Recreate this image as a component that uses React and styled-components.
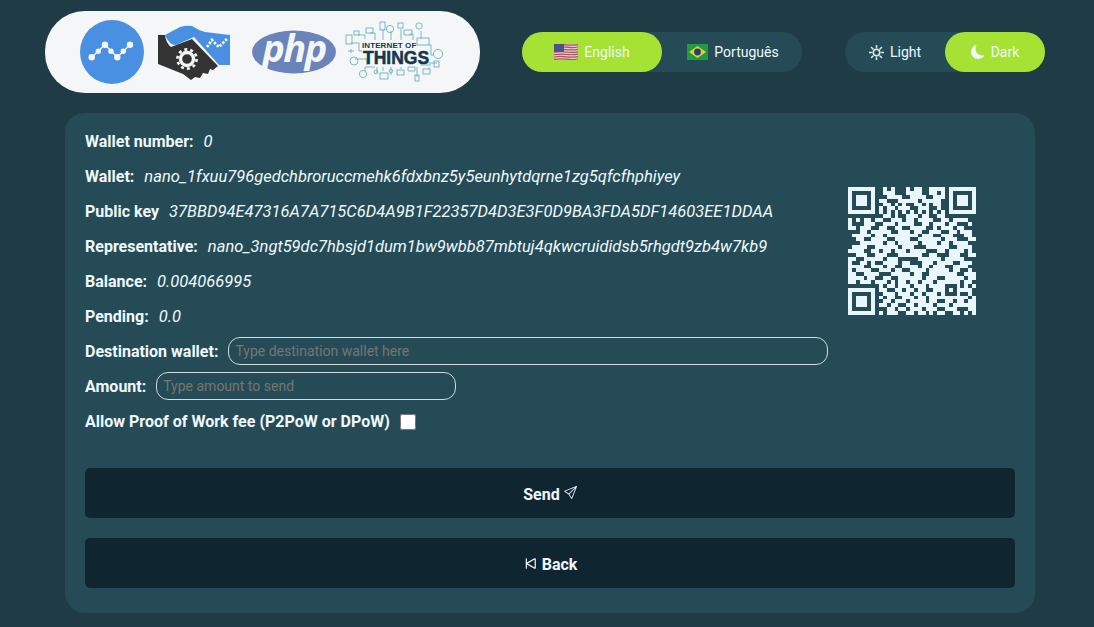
import styled, { createGlobalStyle } from 'styled-components';
import { BsSend, BsSkipStart, BsSun, BsMoonFill } from 'react-icons/bs';

const GlobalStyle = createGlobalStyle`
    * {
        box-sizing: border-box;
    }
    body {
        margin: 0;
        background: #1f3c46;
        color: #f0f8ff;
        font-family: Roboto, "Liberation Sans", sans-serif;
        font-size: 16px;
    }
`;

const QR_ROWS = [
    '111111100101000101100111101111111',
    '100000100111000111100110101000001',
    '101110100011110011110011101011101',
    '101110101100011111011111001011101',
    '101110100110101001101011001011101',
    '100000101011011100111001001000001',
    '111111101010101010101010101111111',
    '000000000110100111011001100000000',
    '101011011001110110111100110111100',
    '100011100111011110011011101100010',
    '110111001100110011110010111011000',
    '000110111110011101100111001101110',
    '011111011011111111011100111000110',
    '001100111100111100111111011100011',
    '000111111011011111011110110111100',
    '011110011111101110001111110011110',
    '111100110110111011110001101111010',
    '001110011100011111100110001110011',
    '110011111011100000111111011111000',
    '100110100111101100011101111001110',
    '111100111011001111011011100111100',
    '101111001110110011110111110110010',
    '110011110001111101100111111100111',
    '111101100110011111101110011111011',
    '110111011101011011011101111110110',
    '000000001011011101110111100010101',
    '111111101100110110110011101011110',
    '100000100111011101101110100010010',
    '101110101011001110110111111111101',
    '101110100110111011110110011011011',
    '101110101101100110111101110111111',
    '100000100011011011101110011100011',
    '111111101011100110110101100110101',
];

const qrPath = QR_ROWS.map((row, y) =>
    row.split('').map((c, x) => (c === '1' ? `M${x} ${y}h1v1h-1z` : '')).join('')
).join('');

const fields = [
    { label: 'Wallet number:', value: '0' },
    { label: 'Wallet:', value: 'nano_1fxuu796gedchbroruccmehk6fdxbnz5y5eunhytdqrne1zg5qfcfhphiyey' },
    { label: 'Public key', value: '37BBD94E47316A7A715C6D4A9B1F22357D4D3E3F0D9BA3FDA5DF14603EE1DDAA' },
    { label: 'Representative:', value: 'nano_3ngt59dc7hbsjd1dum1bw9wbb87mbtuj4qkwcruididsb5rhgdt9zb4w7kb9' },
    { label: 'Balance:', value: '0.004066995' },
    { label: 'Pending:', value: '0.0' },
];

const NANO_DOTS = [[11.7, 37.3, 3.2], [18.3, 31.3, 2.7], [25, 24.7, 3.2], [31, 31.3, 2.7], [37.3, 37.3, 3.2], [43.3, 31.3, 2.7], [50, 24.7, 3.2]];

const NanoLogo = () => (
    <svg width="64" height="64" viewBox="0 0 64 64">
        <circle cx="32" cy="32" r="32" fill="#4a90e2" />
        <path d="M11.7 37.3 L25 24.7 L37.3 37.3 L50 24.7" fill="none" stroke="#f4f6f8" strokeWidth="1.4" />
        {NANO_DOTS.map(([cx, cy, r]) => (
            <circle key={cx} cx={cx} cy={cy} r={r} fill="#f4f6f8" />
        ))}
    </svg>
);

const HandshakeLogo = () => (
    <svg width="73" height="56" viewBox="0 -2 73 56">
        <path d="M7 9 L22 1 Q28 -1 34 0 Q40 4 47 6 L72 9 V39 H61 L36 11 L18 19 Q11 19 7 9z" fill="#4a90e2" />
        <path d="M0 9 H7 Q8 17 13 21 L34 13 L60 40 L55 44 L52 43 L50 48 L45 47 L42 52 L37 51 L33 54 L25 48 L0 38z" fill="#333333" />
        <path d="M49 21 L54 14 L61 21 L69 13" fill="none" stroke="#f4f6f8" strokeWidth="2.8" strokeDasharray="2.4 1.5" />
        <circle cx="29" cy="33" r="6.5" fill="none" stroke="#f4f6f8" strokeWidth="3.4" />
        <circle cx="29" cy="33" r="9.6" fill="none" stroke="#f4f6f8" strokeWidth="2.6" strokeDasharray="3 3.03" />
    </svg>
);

const PhpLogo = () => (
    <svg width="84" height="60" viewBox="0 -8 84 60">
        <ellipse cx="42" cy="22" rx="42" ry="21.5" fill="#6a84bb" />
        <PhpText x="42" y="32" textAnchor="middle">php</PhpText>
    </svg>
);

const PhpText = styled.text`
    fill: #f4f6f8;
    font-family: "Open Sans", "Liberation Sans", sans-serif;
    font-size: 38px;
    font-style: italic;
    font-weight: 700;
    letter-spacing: -1.5px;
`;

const IotLogo = () => (
    <svg width="100" height="62" viewBox="0 0 100 62">
        <g fill="none" stroke="#5fa9b6" strokeWidth="0.8">
            <path d="M6 22 H14 V30 H17 M13 14 H20 V18 M25 12 H30 V19 M38 8 V19 M46 10 V19 M56 8 V19 M64 13 H68 V19 M76 10 V18 M84 24 H86 V34 H88 M86 44 H76 V42 M92 42 H84 M10 38 H22 V44 M20 50 V46 H30 M32 52 V46 M38 50 V46 M46 54 V46 M56 48 V46 M72 56 V46 M84 48 V46" />
            <rect x="1" y="14" width="6" height="9" />
            <rect x="9" y="10" width="5" height="4" />
            <rect x="21" y="7" width="7" height="5" />
            <rect x="35" y="1" width="5" height="8" />
            <circle cx="45" cy="8" r="3.6" />
            <rect x="53" y="2" width="5" height="5" />
            <path d="M59 9 h8 v5 h-8z" />
            <circle cx="74" cy="5" r="3.2" />
            <rect x="72" y="17" width="12" height="7" />
            <circle cx="93" cy="33" r="4.6" />
            <rect x="89" y="40" width="5" height="6" />
            <circle cx="9" cy="40" r="4" />
            <circle cx="18" cy="53" r="3.6" />
            <circle cx="31" cy="51" r="1.8" />
            <rect x="35" y="52" width="8" height="6" />
            <circle cx="46" cy="50" r="1.8" />
            <rect x="52" y="49" width="7" height="5" />
            <path d="M63 46 h7 v4 h-7z" />
            <rect x="70" y="54" width="4" height="6" />
            <rect x="78" y="48" width="7" height="5" />
            <path d="M3 30 h6 M6 28 v4" />
        </g>
        <IotSmall x="17" y="27">INTERNET OF</IotSmall>
        <IotBig x="18" y="43">THINGS</IotBig>
    </svg>
);

const IotSmall = styled.text`
    fill: #14384a;
    font-family: "Liberation Sans", sans-serif;
    font-size: 8px;
    font-weight: 700;
    letter-spacing: 0.1px;
`;

const IotBig = styled.text`
    fill: #14384a;
    stroke: #14384a;
    stroke-width: 0.5px;
    font-family: "Liberation Sans", sans-serif;
    font-size: 17.5px;
    font-weight: 700;
`;

const UsFlag = () => (
    <svg width="24" height="16" viewBox="0 0 24 16">
        <rect width="24" height="16" fill="#e3ccd2" />
        {[0, 1, 2, 3, 4, 5, 6].map((i) => (
            <path key={i} d={`M0 ${i * 2.4 + 1} Q6 ${i * 2.4} 12 ${i * 2.4 + 0.8} T24 ${i * 2.4 + 0.6}`} fill="none" stroke="#b0505f" strokeWidth="1.2" />
        ))}
        <rect width="10" height="8" fill="#4a5488" />
    </svg>
);

const BrFlag = () => (
    <svg width="21" height="16" viewBox="0 0 21 16">
        <rect width="21" height="16" fill="#1f9a46" />
        <path d="M10.5 2 L19 8 L10.5 14 L2 8z" fill="#e8d21f" />
        <circle cx="10.5" cy="8" r="3.4" fill="#1f3f86" />
    </svg>
);

const App = () => (
    <Page>
        <GlobalStyle />
        <Header>
            <LogoPill>
                <LogoSlot $gap={0}><NanoLogo /></LogoSlot>
                <LogoSlot $gap={14}><HandshakeLogo /></LogoSlot>
                <LogoSlot $gap={21}><PhpLogo /></LogoSlot>
                <LogoSlot $gap={9}><IotLogo /></LogoSlot>
            </LogoPill>
            <Toggle>
                <ToggleOption $active $width={140}><UsFlag />English</ToggleOption>
                <ToggleOption $width={140} $shift={2}><BrFlag />Português</ToggleOption>
            </Toggle>
            <ThemeToggle>
                <ToggleOption $width={100}><SunIcon size={15} />Light</ToggleOption>
                <ToggleOption $active $width={100}><BsMoonFill size={14} />Dark</ToggleOption>
            </ThemeToggle>
        </Header>
        <Panel>
            <Details>
                <Fields>
                    {fields.map((field) => (
                        <Row key={field.label}>
                            <Label>{field.label}</Label>
                            <Value>{field.value}</Value>
                        </Row>
                    ))}
                    <Row>
                        <Label>Destination wallet:</Label>
                        <TextInput $width={600} placeholder="Type destination wallet here" />
                    </Row>
                    <Row>
                        <Label>Amount:</Label>
                        <TextInput $width={300} placeholder="Type amount to send" />
                    </Row>
                    <Row>
                        <Label>Allow Proof of Work fee (P2PoW or DPoW)</Label>
                        <Check type="checkbox" />
                    </Row>
                </Fields>
                <QrCode viewBox="0 0 33 33" shapeRendering="crispEdges">
                    <path d={qrPath} fill="#e9f6fd" />
                </QrCode>
            </Details>
            <ActionButton>Send <SendIcon size={13} /></ActionButton>
            <ActionButton><BackIcon size={19} /> Back</ActionButton>
        </Panel>
    </Page>
);

const Page = styled.div`
    width: 1094px;
    height: 627px;
    padding-top: 11px;
    overflow: hidden;
`;

const Header = styled.header`
    display: flex;
    align-items: center;
    gap: 42px;
    padding-left: 45px;
`;

const LogoPill = styled.div`
    display: flex;
    align-items: center;
    width: 435px;
    height: 82px;
    padding-left: 35px;
    background: #f4f6f8;
    border-radius: 40px;
`;

const LogoSlot = styled.div`
    display: flex;
    margin-left: ${(p) => p.$gap}px;
`;

const Toggle = styled.div`
    display: flex;
    height: 40px;
    background: #254c56;
    border-radius: 20px;
`;

const ThemeToggle = styled(Toggle)`
    margin-left: 1px;
`;

const ToggleOption = styled.div`
    display: flex;
    align-items: center;
    justify-content: center;
    gap: 6px;
    width: ${(p) => p.$width}px;
    padding-left: ${(p) => p.$shift || 0}px;
    border-radius: 20px;
    font-size: 14px;
    background: ${(p) => (p.$active ? '#a5e234' : 'transparent')};
`;

const SunIcon = styled(BsSun)`
    stroke: currentColor;
    stroke-width: 0.7px;
`;

const SendIcon = styled(BsSend)`
    margin-top: -3px;
`;

const BackIcon = styled(BsSkipStart)`
    margin: -2px -2px 0 -2px;
`;

const Panel = styled.main`
    display: flex;
    flex-direction: column;
    gap: 20px;
    width: 970px;
    height: 500px;
    margin: 20px 0 0 65px;
    padding: 11px 20px 25px;
    background: #254c56;
    border-radius: 20px;
`;

const Details = styled.div`
    display: flex;
    margin-bottom: 9px;
`;

const Fields = styled.div`
    width: 763px;
`;

const Row = styled.div`
    display: flex;
    align-items: center;
    gap: 10px;
    height: 35px;
`;

const Label = styled.span`
    font-weight: 700;
    white-space: nowrap;
`;

const Value = styled.span`
    font-size: 16.5px;
    font-style: italic;
    white-space: nowrap;
`;

const TextInput = styled.input`
    width: ${(p) => p.$width}px;
    height: 28px;
    margin-bottom: 1px;
    padding: 0 6px;
    color: #f0f8ff;
    background: transparent;
    border: 1px solid #d4d9db;
    border-radius: 12px;
    font-family: inherit;
    font-size: 14px;
    outline: none;
    &::placeholder {
        color: #757575;
    }
`;

const Check = styled.input`
    width: 16px;
    height: 16px;
    margin: 0;
`;

const QrCode = styled.svg`
    width: 128px;
    height: 128px;
    margin-top: 63px;
`;

const ActionButton = styled.button`
    display: flex;
    align-items: center;
    justify-content: center;
    gap: 4px;
    height: 50px;
    padding-top: 3px;
    color: #f0f8ff;
    background: #0f2630;
    border: none;
    border-radius: 5px;
    font-family: inherit;
    font-size: 16px;
    font-weight: 700;
`;

export default App;
